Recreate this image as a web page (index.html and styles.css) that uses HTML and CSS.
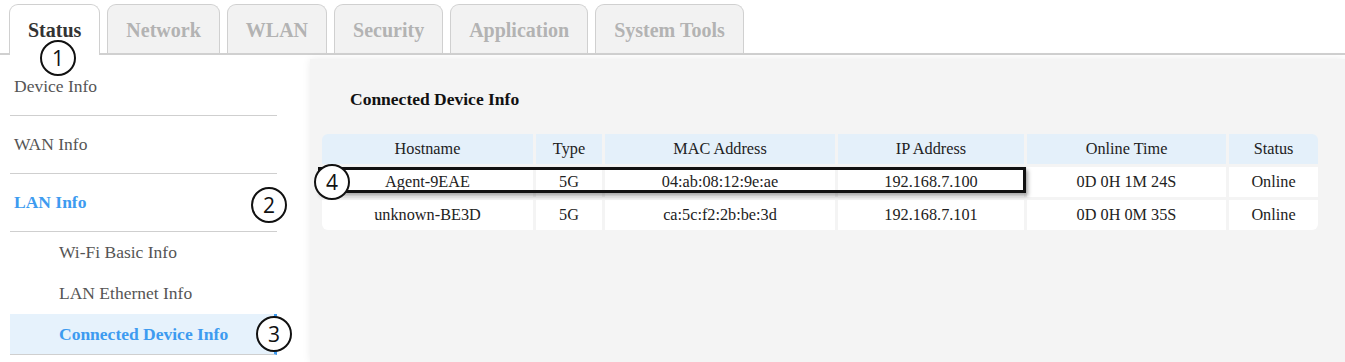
FILE: index.html
```html
<!DOCTYPE html>
<html lang="en">
<head>
    <meta charset="UTF-8">
    <title>Connected Device Info</title>
    <link rel="stylesheet" href="styles.css">
</head>
<body>
    <div class="tabs">
        <div class="tab active">Status</div>
        <div class="tab">Network</div>
        <div class="tab">WLAN</div>
        <div class="tab">Security</div>
        <div class="tab">Application</div>
        <div class="tab">System Tools</div>
    </div>

    <div class="main">
        <div class="sidebar">
            <div class="nav-item">Device Info</div>
            <div class="nav-item">WAN Info</div>
            <div class="nav-item selected">LAN Info</div>
            <div class="sub-item">Wi-Fi Basic Info</div>
            <div class="sub-item">LAN Ethernet Info</div>
            <div class="sub-item current">Connected Device Info</div>
        </div>

        <div class="panel">
            <h3>Connected Device Info</h3>
            <table class="devices">
                <colgroup>
                    <col style="width:211px">
                    <col style="width:66px">
                    <col style="width:230px">
                    <col style="width:186px">
                    <col style="width:199px">
                    <col style="width:89px">
                </colgroup>
                <tr>
                    <th>Hostname</th>
                    <th>Type</th>
                    <th>MAC Address</th>
                    <th>IP Address</th>
                    <th>Online Time</th>
                    <th>Status</th>
                </tr>
                <tr>
                    <td>Agent-9EAE</td>
                    <td>5G</td>
                    <td>04:ab:08:12:9e:ae</td>
                    <td>192.168.7.100</td>
                    <td>0D 0H 1M 24S</td>
                    <td>Online</td>
                </tr>
                <tr>
                    <td>unknown-BE3D</td>
                    <td>5G</td>
                    <td>ca:5c:f2:2b:be:3d</td>
                    <td>192.168.7.101</td>
                    <td>0D 0H 0M 35S</td>
                    <td>Online</td>
                </tr>
            </table>
        </div>
    </div>

    <!-- callouts -->
    <div class="mark-box"></div>
    <div class="callout c1">1</div>
    <div class="callout c2">2</div>
    <div class="callout c3">3</div>
    <div class="callout c4">4</div>
</body>
</html>
```

FILE: styles.css
```css
body {
    margin: 0;
    font-family: 'Liberation Serif', 'Times New Roman', serif;
    color: #333;
    background-color: white;
    height: 362px;
    overflow: hidden;
    position: relative;
}
.tabs {
    display: flex;
    gap: 7px;
    padding: 4px 0 0 9px;
    border-bottom: 2px solid #d0d0d0;
    height: 49px;
}
.tab {
    height: 48px;
    padding: 0 18px;
    border: 1px solid #d0d0d0;
    border-bottom: none;
    border-radius: 9px 9px 0 0;
    background-color: #f2f2f2;
    color: #b3b3b3;
    font-size: 20px;
    font-weight: bold;
    line-height: 50px;
}
.tab.active {
    background-color: white;
    color: #333;
    height: 50px;
    position: relative;
    z-index: 1;
}
.main {
    display: flex;
    height: 307px;
}
.sidebar {
    width: 267px;
    margin-left: 10px;
    padding-top: 3px;
    font-size: 17.5px;
    color: #555;
}
.nav-item {
    height: 57px;
    padding-left: 4px;
    display: flex;
    align-items: center;
    border-bottom: 1px solid #cfcfcf;
}
.nav-item.selected {
    color: #3d9bf0;
    font-weight: bold;
}
.sub-item {
    height: 41px;
    padding-left: 49px;
    display: flex;
    align-items: center;
}
.sub-item.current {
    height: 40px;
    background-color: #e6f2fc;
    color: #3d9bf0;
    font-weight: bold;
    border-right: 3px solid #3d9bf0;
    border-bottom: 1px solid #cfcfcf;
}
.panel {
    flex: 1;
    box-sizing: border-box;
    margin: 4px 0 0 33px;
    background-color: #f4f4f4;
    box-shadow: 0 0 8px rgba(0,0,0,0.08);
    padding: 30px 0 0 9px;
}
.panel h3 {
    margin: 0 0 21px 31px;
    font-size: 17.5px;
    color: #111;
}
.devices {
    table-layout: fixed;
    width: 1002px;
    border-collapse: separate;
    border-spacing: 3px;
    font-family: 'Liberation Serif', 'Times New Roman', serif;
    font-size: 16.25px;
    color: #222;
}
.devices th,
.devices td {
    height: 30px;
    padding: 0;
    text-align: center;
    font-weight: normal;
    background-color: white;
}
.devices th {
    background-color: #e4f0fa;
}
.devices tr:first-child th:first-child { border-top-left-radius: 6px; }
.devices tr:first-child th:last-child { border-top-right-radius: 6px; }
.devices tr:last-child td:first-child { border-bottom-left-radius: 6px; }
.devices tr:last-child td:last-child { border-bottom-right-radius: 6px; }

.callout {
    position: absolute;
    width: 32px;
    height: 32px;
    border: 2.5px solid #111;
    border-radius: 50%;
    background-color: white;
    color: #111;
    font-family: 'Open Sans', 'DejaVu Sans', sans-serif;
    font-size: 21px;
    line-height: 32px;
    text-align: center;
    z-index: 3;
}
.c1 { left: 40px; top: 40px; }
.c2 { left: 251px; top: 187px; }
.c3 { left: 256px; top: 316px; }
.c4 { left: 314px; top: 164px; }
.mark-box {
    position: absolute;
    left: 318px;
    top: 167px;
    width: 702px;
    height: 20px;
    border: 3px solid #111;
    box-shadow: 2px 3px 4px rgba(0,0,0,0.35);
    z-index: 2;
}
```
